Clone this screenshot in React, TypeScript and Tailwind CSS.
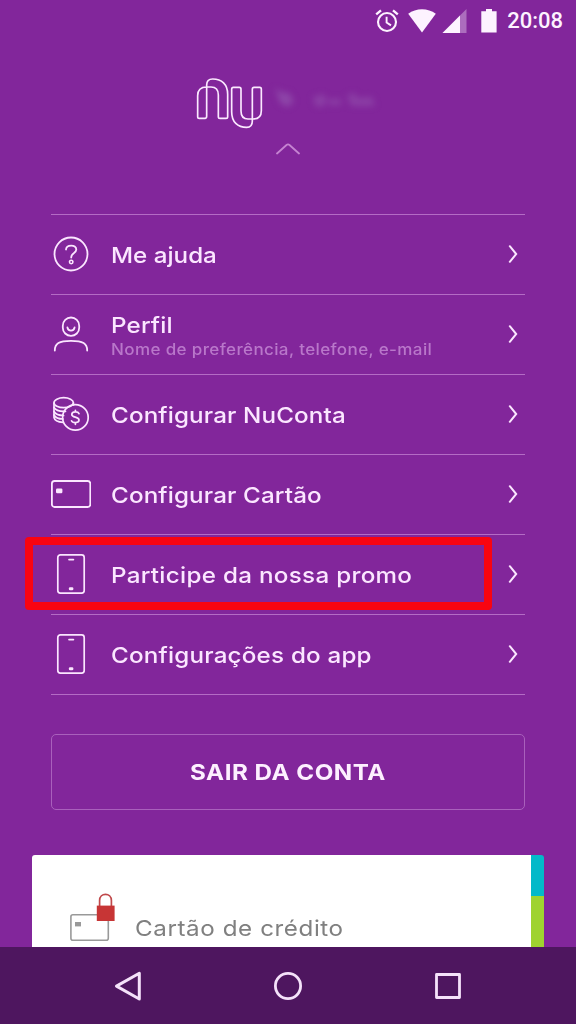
import React from "react";

interface MenuItem {
    title: string;
    subtitle?: string;
    icon: React.ReactNode;
    tracking: string;
    highlighted?: boolean;
}

const HelpIcon = () => (
    <svg width="40" height="40" viewBox="0 0 40 40" fill="none" stroke="currentColor" strokeWidth="1.8" strokeLinecap="round">
        <circle cx="20" cy="20" r="16.5" />
        <path d="M15 15.5C15.3 10.4 25.3 10.2 25.3 15.6C25.3 19.3 20.2 18.6 20.2 23.5" />
        <circle cx="20.2" cy="28" r="1.7" strokeWidth="1.6" />
    </svg>
);

const ProfileIcon = () => (
    <svg width="40" height="40" viewBox="0 0 40 40" fill="none" stroke="currentColor" strokeWidth="1.8" strokeLinecap="round">
        <rect x="11.8" y="3.5" width="16.4" height="18.4" rx="8.2" />
        <path d="M16.4 13.4C17 17.6 23 17.6 23.6 13.4" />
        <path d="M3.8 36.5C3.8 29.5 8 26.8 20 26.8S36.2 29.5 36.2 36.5" />
    </svg>
);

const CoinsIcon = () => (
    <svg width="40" height="40" viewBox="0 0 40 40" fill="none" stroke="currentColor" strokeWidth="1.7" strokeLinecap="round">
        <ellipse cx="12.7" cy="8.7" rx="9.7" ry="5" />
        <path d="M3 9V23.5C3.5 25.8 6.5 28 12 28.4" />
        <path d="M3 13.5C4.5 16 8 17.7 14.5 17.3" />
        <path d="M3 17.5C4.5 20.3 7.5 21.5 12.6 21.5" />
        <path d="M3 21C4.5 23.8 7.5 25 12 25" />
        <path d="M22.4 9V11" />
        <circle cx="24.4" cy="23.4" r="12.8" />
        <path d="M28 19.6C27 17.3 20.8 17.2 20.8 20.4C20.8 24 28 22.3 28 26.1C28 29.4 21.5 29.3 20.5 26.8M24.4 16.3V18M24.4 28.6V30.3" />
    </svg>
);

const CardIcon = () => (
    <svg width="40" height="40" viewBox="0 0 40 40" fill="none" stroke="currentColor" strokeWidth="1.8">
        <rect x="0.9" y="7" width="38.4" height="26" rx="2.6" />
        <rect x="5" y="14.6" width="6.4" height="4.6" rx="1.2" fill="currentColor" stroke="none" />
    </svg>
);

const PhoneIcon = () => (
    <svg width="40" height="40" viewBox="0 0 40 40" fill="none" stroke="currentColor" strokeWidth="1.7">
        <rect x="6.8" y="0.9" width="26.4" height="38.2" rx="2.6" />
        <path d="M18 5.6H22.4" strokeLinecap="round" />
        <rect x="17.8" y="33.3" width="4.6" height="3" rx="1.3" fill="currentColor" stroke="none" />
    </svg>
);

const menuItems: MenuItem[] = [
    { title: "Me ajuda", icon: <HelpIcon />, tracking: "tracking-[0px]" },
    { title: "Perfil", subtitle: "Nome de preferência, telefone, e-mail", icon: <ProfileIcon />, tracking: "tracking-[0.15px]" },
    { title: "Configurar NuConta", icon: <CoinsIcon />, tracking: "tracking-[0.12px]" },
    { title: "Configurar Cartão", icon: <CardIcon />, tracking: "tracking-[0.12px]" },
    { title: "Participe da nossa promo", icon: <PhoneIcon />, tracking: "tracking-[0.27px]", highlighted: true },
    { title: "Configurações do app", icon: <PhoneIcon />, tracking: "tracking-[0.18px]" },
];

const StatusBar = () => (
    <div className="flex h-[41px] shrink-0 items-center justify-end pr-[13px] text-[#fdf3ff]">
        <svg width="26" height="26" viewBox="0 0 26 26" fill="none" stroke="currentColor" strokeWidth="2.1" className="mr-2">
            <circle cx="13" cy="14" r="9" />
            <path d="M12.6 8.8V14.6L17 17.4" strokeWidth="1.9" />
            <path d="M2.2 6.4L7 2.4M23.8 6.4L19 2.4" strokeWidth="2.4" />
        </svg>
        <svg width="28" height="26" viewBox="0 0 28 26" fill="currentColor" className="mr-1.5">
            <path d="M14 24.5L0.2 5.8C8 -0.2 20 -0.2 27.8 5.8Z" />
        </svg>
        <svg width="25" height="26" viewBox="0 0 25 26" className="mr-3.5">
            <path d="M24.5 1V25H0.5Z" fill="currentColor" opacity="0.35" />
            <path d="M18 7.5V25H0.5Z" fill="currentColor" />
        </svg>
        <svg width="16" height="26" viewBox="0 0 16 26" fill="currentColor" className="mr-[10px]">
            <path d="M5 1H11V3.2H15.6V24.5H0.3V3.2H5Z" />
        </svg>
        <span className="pt-px font-['Roboto',sans-serif] text-[22px] leading-none font-medium">20:08</span>
    </div>
);

const Header = () => (
    <header className="flex h-[173px] shrink-0 flex-col items-center pt-[36px]">
        <div className="flex w-[184px] items-start">
            <svg width="67" height="52" viewBox="48 36 201 156" fill="none" stroke="#fbe9ff" strokeWidth="5" strokeLinejoin="round">
                <path d="M80 154V60Q80 42 98 42C125 42 143 58 143 88V155Q143 160 138 160H120Q115 160 115 155V90Q115 66 93 66H80Q53 66 53 92V155Q53 160 58 160H75Q80 160 80 154" />
                <path d="M217 73V168Q217 187 200 187C173 187 155 171 155 140V73Q155 67 160 67H178Q183 67 183 73V138Q183 162 204 162H219Q244 162 244 137V73Q244 67 239 67H222Q217 67 217 73" />
            </svg>
            {/* Obscured account holder name */}
            <svg width="117" height="52" viewBox="0 0 117 52" fill="#8d45a8" className="blur-[3px]">
                <path d="M12 11L18 15L26 16L31 24L25 30L17 26Z" />
                <path d="M50 20L60 17L64 23L60 30L52 29ZM65 22H78V28H66ZM84 18L92 16L94 21L109 20L112 29H88Z" opacity="0.8" />
            </svg>
        </div>
        <svg width="24" height="12" viewBox="0 0 24 12" fill="none" stroke="#c583d1" strokeWidth="1.8" strokeLinecap="round" className="mt-[14px]">
            <path d="M1 10.5L10.5 2Q12 0.9 13.5 2L23 10.5" />
        </svg>
    </header>
);

const MenuRow = ({ item }: { item: MenuItem }) => (
    <li className="relative flex h-20 items-center border-t border-[#b46bc5] pb-px text-[#fbe6ff]">
        {item.icon}
        <div className={item.subtitle ? "ml-5 flex-1 pt-[5px]" : "ml-5 flex-1 pt-px"}>
            <p className={`origin-left scale-x-110 text-[22px] leading-[26px] font-medium whitespace-nowrap ${item.tracking}`}>{item.title}</p>
            {item.subtitle && (
                <p className="origin-left scale-x-110 text-[15.5px] leading-6 font-medium tracking-[0.32px] whitespace-nowrap text-[#b977ca]">{item.subtitle}</p>
            )}
        </div>
        <svg width="10" height="20" viewBox="0 0 10 20" fill="none" stroke="currentColor" strokeWidth="2" strokeLinecap="round" className="mr-[7px]">
            <path d="M1.8 2.2L8.2 10L1.8 17.8" />
        </svg>
        {item.highlighted && (
            <div className="absolute top-[2px] -left-[26px] h-[73px] w-[467px] rounded-[4px] border-8 border-[#f90411]" />
        )}
    </li>
);

const CreditCardPanel = () => (
    <section className="mx-8 mt-[45px] flex h-[92px] shrink-0 overflow-hidden rounded-t-[3px]">
        <div className="flex flex-1 items-start bg-white pt-[37px] pl-[38px]">
            <svg width="46" height="50" viewBox="0 0 46 50" fill="none">
                <rect x="0.9" y="22.8" width="37.4" height="25.4" rx="2" stroke="#999" strokeWidth="1.6" />
                <rect x="5" y="30" width="6" height="4.4" fill="#999" />
                <path d="M29.6 14V8.5C29.6 0.2 41.4 0.2 41.4 8.5V14" stroke="#c0494b" strokeWidth="1.7" />
                <rect x="26.8" y="13.6" width="17.8" height="15.4" fill="#c73535" />
            </svg>
            <p className="mt-[23px] ml-[19px] origin-left scale-x-110 text-[22px] leading-[26px] tracking-[0.52px] whitespace-nowrap text-[#808080]">Cartão de crédito</p>
        </div>
        <div className="flex w-[13px] flex-col">
            <div className="h-[41px] bg-[#03b9c9]" />
            <div className="flex-1 bg-[#9fd32f]" />
        </div>
    </section>
);

const NavigationBar = () => (
    <nav className="flex h-[77px] shrink-0 items-center justify-between bg-[#4e165f] px-[112px] text-[#f5e2fa]">
        <svg width="32" height="32" viewBox="0 0 32 32" fill="none" stroke="currentColor" strokeWidth="3" strokeLinejoin="round">
            <path d="M27.3 3.3V29L4.5 16.1Z" />
        </svg>
        <svg width="32" height="32" viewBox="0 0 32 32" fill="none" stroke="currentColor" strokeWidth="2.8">
            <circle cx="16" cy="16" r="12.6" />
        </svg>
        <svg width="32" height="32" viewBox="0 0 32 32" fill="none" stroke="currentColor" strokeWidth="2.8" strokeLinejoin="round">
            <rect x="4.5" y="4.5" width="23" height="23" />
        </svg>
    </nav>
);

export default function App() {
    return (
        <div className="flex h-[1024px] w-[576px] flex-col overflow-hidden bg-[#82269b] font-['Inter',sans-serif]">
            <StatusBar />
            <Header />
            <ul className="mx-[51px] shrink-0 border-b border-[#b46bc5]">
                {menuItems.map((item) => (
                    <MenuRow key={item.title} item={item} />
                ))}
            </ul>
            <button className="mx-[51px] mt-[39px] h-[76px] shrink-0 rounded-[5px] border-[1.5px] border-[#a960bc] text-[22px] font-bold tracking-[0.45px] text-[#fdf0ff]">
                <span className="inline-block scale-x-110">SAIR DA CONTA</span>
            </button>
            <CreditCardPanel />
            <NavigationBar />
        </div>
    );
}
